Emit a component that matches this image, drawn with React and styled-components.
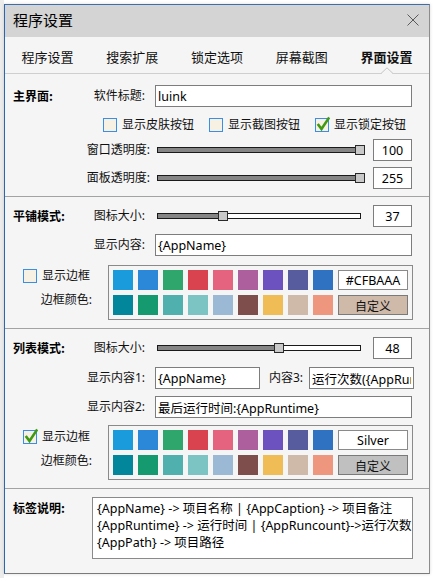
import React from "react";
import styled, { createGlobalStyle } from "styled-components";

const FONT = `"Noto Sans", "Noto Sans CJK SC", sans-serif`;

const Global = createGlobalStyle`
  * { box-sizing: border-box; }
  body {
    margin: 0;
    background: #ffffff;
    font-family: ${FONT};
    color: #000;
  }
`;

const Page = styled.div`
  padding: 4px 0 0 4px;
  width: 434px;
  height: 578px;
  background: linear-gradient(to right, #ececec 0, #ececec 4px, #ffffff 4px);
`;

const Window = styled.div`
  width: 426px;
  height: 570px;
  border: 1px solid;
  border-color: #3d6ea8 #8c8c8c #7a7a7a #2d66b0;
  background: #f5f5f5;
  display: flex;
  flex-direction: column;
  box-shadow: 0 0 3px rgba(0, 0, 0, 0.15);
`;

const TitleBar = styled.div`
  height: 32px;
  flex-shrink: 0;
  background: #d4d4d4;
  display: flex;
  align-items: center;
  justify-content: space-between;
  padding: 0 10px 0 8px;
`;

const TitleText = styled.div`
  font-family: "Noto Sans CJK SC", sans-serif;
  font-size: 15px;
  line-height: 20px;
  margin-top: -2px;
`;

const CloseIcon = styled.svg`
  width: 12px;
  height: 12px;
  margin-top: -2px;
`;

const TabBar = styled.div`
  position: relative;
  height: 37px;
  flex-shrink: 0;
  display: grid;
  grid-template-columns: repeat(5, 1fr);
  border-bottom: 1px solid #cfcfcf;
  background: #f5f5f5;
`;

const Tab = styled.div`
  position: relative;
  display: flex;
  align-items: center;
  justify-content: center;
  padding-top: 3px;
  font-family: "Noto Sans CJK SC", sans-serif;
  font-size: 13px;
  font-weight: ${(p) => (p.$active ? 700 : 400)};
  color: #111;
`;

const Notch = styled.svg`
  position: absolute;
  bottom: -1px;
  left: 50%;
  margin-left: -6px;
  width: 12px;
  height: 7px;
`;

const Section = styled.div`
  padding: ${(p) => p.$pt}px 0 ${(p) => p.$pb}px 8px;
  border-bottom: ${(p) => (p.$last ? "none" : "1px solid #a3a3a3")};
  flex-shrink: 0;
  flex-grow: ${(p) => (p.$last ? 1 : 0)};
  display: flex;
  flex-direction: column;
`;

const Row = styled.div`
  display: flex;
  align-items: ${(p) => p.$align || "center"};
  height: ${(p) => p.$h}px;
  margin-top: ${(p) => p.$mt || 0}px;
`;

const Lead = styled.div`
  width: ${(p) => p.$w}px;
  margin-right: ${(p) => p.$gap}px;
  flex-shrink: 0;
  display: flex;
  justify-content: space-between;
  align-items: center;
  align-self: ${(p) => (p.$top ? "flex-start" : "center")};
  height: ${(p) => (p.$top ? "22px" : "auto")};
`;

const SectionTitle = styled.span`
  font-family: "Noto Sans CJK SC", sans-serif;
  font-size: 12px;
  font-weight: 700;
  line-height: 16px;
`;

const FieldLabel = styled.span`
  font-family: ${FONT};
  font-size: 12px;
  line-height: 16px;
  white-space: nowrap;
  color: #111;
  margin-left: ${(p) => p.$ml || 0}px;
  margin-right: ${(p) => p.$mr || 0}px;
`;

const TextBox = styled.input`
  width: ${(p) => p.$w}px;
  height: 22px;
  border: 1px solid #7d7d7d;
  background: #ffffff;
  padding: 0 2px;
  font-family: ${FONT};
  font-size: 12.5px;
  color: #000;
  outline: none;
  text-align: ${(p) => (p.$center ? "center" : "left")};
`;

const CheckRow = styled.div`
  display: flex;
  align-items: center;
  height: 13px;
  margin-top: ${(p) => p.$mt || 0}px;
  padding-left: ${(p) => p.$pl || 0}px;
  gap: 15px;
`;

const CheckItem = styled.label`
  display: flex;
  align-items: center;
  gap: 5px;
  font-family: ${FONT};
  font-size: 12px;
  line-height: 16px;
  color: #111;
`;

const Box = styled.span`
  position: relative;
  width: 14px;
  height: 14px;
  border: 1px solid #3a8ee6;
  background: #f6f1e2;
  flex-shrink: 0;
`;

const CheckMark = styled.svg`
  position: absolute;
  left: 0px;
  top: -3px;
  width: 14px;
  height: 16px;
`;

const SliderWrap = styled.div`
  position: relative;
  width: ${(p) => p.$w}px;
  height: 10px;
  margin-left: 2px;
  margin-right: ${(p) => p.$mr}px;
  display: flex;
  align-items: center;
  flex-shrink: 0;
`;

const Track = styled.div`
  width: 100%;
  height: 6px;
  border: 1px solid #1a1a1a;
  background: #ffffff;
  display: flex;
`;

const Fill = styled.div`
  height: 100%;
  background: #858585;
`;

const Thumb = styled.div`
  position: absolute;
  top: 0;
  width: 10px;
  height: 10px;
  background: #c9c9c9;
  border: 1px solid #2a2a2a;
`;

const Panel = styled.div`
  width: 305px;
  height: 55px;
  border: 1px solid #8a8a8a;
  padding: 4px;
  display: flex;
  flex-shrink: 0;
`;

const Swatches = styled.div`
  display: grid;
  grid-template-columns: repeat(9, 20px);
  grid-template-rows: 20px 20px;
  column-gap: 5px;
  row-gap: 5px;
  margin-right: 5px;
`;

const Swatch = styled.div`
  background: ${(p) => p.$c};
`;

const PanelSide = styled.div`
  width: 70px;
  display: flex;
  flex-direction: column;
  gap: 5px;
`;

const ColorText = styled.div`
  height: 20px;
  border: 1px solid #8a8a8a;
  background: #fff;
  display: flex;
  align-items: center;
  justify-content: center;
  font-family: ${FONT};
  font-size: 12.5px;
`;

const CustomButton = styled.div`
  height: 20px;
  border: 1px solid #7a7a7a;
  background: ${(p) => p.$bg};
  display: flex;
  align-items: center;
  justify-content: center;
  font-family: "Noto Sans CJK SC", sans-serif;
  font-size: 12px;
  color: #111;
`;

const BorderCol = styled.div`
  width: 95px;
  flex-shrink: 0;
  display: flex;
  flex-direction: column;
  padding-top: ${(p) => p.$pt}px;
`;

const BorderLabel = styled.div`
  text-align: right;
  padding-right: 16px;
  margin-top: ${(p) => p.$mt}px;
  font-family: ${FONT};
  font-size: 12px;
  line-height: 16px;
  color: #111;
`;

const Notes = styled.div`
  width: 321px;
  height: 62px;
  border: 1px solid #8a8a8a;
  background: #fff;
  padding: 2px 4px;
  font-family: ${FONT};
  font-size: 12.5px;
  line-height: 17px;
  color: #000;
  white-space: nowrap;
  overflow: hidden;
`;

const row1 = ["#1a9bdc", "#2b88d9", "#2ea66c", "#d9434f", "#e5637f", "#ad5e9d", "#6b52be", "#575c9f", "#2f72c1"];
const row2 = ["#01869c", "#159a70", "#4fb0ae", "#7bc4c3", "#9bb8d5", "#7d4e4c", "#f0bc56", "#cfb9a9", "#ef967e"];

function Check({ checked, children }) {
  return (
    <CheckItem>
      <Box>
        {checked && (
          <CheckMark viewBox="0 0 14 16">
            <polyline points="2.5,9 5.5,13 12.5,2.5" fill="none" stroke="#3f9a12" strokeWidth="2.6" strokeLinecap="square" />
          </CheckMark>
        )}
      </Box>
      {children}
    </CheckItem>
  );
}

function Slider({ width, thumb, mr }) {
  return (
    <SliderWrap $w={width} $mr={mr}>
      <Track>
        <Fill style={{ width: thumb + 5 }} />
      </Track>
      <Thumb style={{ left: thumb }} />
    </SliderWrap>
  );
}

function ColorPanel({ text, btn }) {
  return (
    <Panel>
      <Swatches>
        {[...row1, ...row2].map((c, i) => (
          <Swatch key={i} $c={c} />
        ))}
      </Swatches>
      <PanelSide>
        <ColorText>{text}</ColorText>
        <CustomButton $bg={btn}>自定义</CustomButton>
      </PanelSide>
    </Panel>
  );
}

const tabs = ["程序设置", "搜索扩展", "锁定选项", "屏幕截图", "界面设置"];

export default function App() {
  return (
    <Page>
      <Global />
      <Window>
        <TitleBar>
          <TitleText>程序设置</TitleText>
          <CloseIcon viewBox="0 0 12 12">
            <path d="M0.5 0.5 L11.5 11.5 M11.5 0.5 L0.5 11.5" stroke="#5a5a5a" strokeWidth="1" fill="none" />
          </CloseIcon>
        </TitleBar>
        <TabBar>
          {tabs.map((t, i) => (
            <Tab key={t} $active={i === 4}>
              {t}
              {i === 4 && (
                <Notch viewBox="0 0 12 7">
                  <polygon points="0,7 6,1 12,7" fill="#f5f5f5" />
                  <polyline points="0,6.5 6,0.8 12,6.5" fill="none" stroke="#c4c4c4" strokeWidth="1" />
                </Notch>
              )}
            </Tab>
          ))}
        </TabBar>

        <Section $pt={11} $pb={7}>
          <Row $h={22}>
            <Lead $w={132} $gap={10}>
              <SectionTitle>主界面:</SectionTitle>
              <FieldLabel>软件标题:</FieldLabel>
            </Lead>
            <TextBox $w={257} defaultValue="luink" />
          </Row>
          <CheckRow $mt={11} $pl={90}>
            <Check>显示皮肤按钮</Check>
            <Check>显示截图按钮</Check>
            <Check checked>显示锁定按钮</Check>
          </CheckRow>
          <Row $h={22} $mt={8}>
            <Lead $w={137} $gap={5}>
              <span />
              <FieldLabel>窗口透明度:</FieldLabel>
            </Lead>
            <Slider width={208} thumb={198} mr={8} />
            <TextBox $w={39} $center defaultValue="100" />
          </Row>
          <Row $h={22} $mt={6}>
            <Lead $w={137} $gap={5}>
              <span />
              <FieldLabel>面板透明度:</FieldLabel>
            </Lead>
            <Slider width={208} thumb={198} mr={8} />
            <TextBox $w={39} $center defaultValue="255" />
          </Row>
        </Section>

        <Section $pt={8} $pb={8}>
          <Row $h={22}>
            <Lead $w={132} $gap={10}>
              <SectionTitle>平铺模式:</SectionTitle>
              <FieldLabel>图标大小:</FieldLabel>
            </Lead>
            <Slider width={204} thumb={61} mr={12} />
            <TextBox $w={39} $center defaultValue="37" />
          </Row>
          <Row $h={22} $mt={7}>
            <Lead $w={132} $gap={10}>
              <span />
              <FieldLabel>显示内容:</FieldLabel>
            </Lead>
            <TextBox $w={257} defaultValue="{AppName}" />
          </Row>
          <Row $h={55} $mt={9} $align="flex-start">
            <BorderCol $pt={4}>
              <CheckRow $pl={10}>
                <Check>显示边框</Check>
              </CheckRow>
              <BorderLabel $mt={10}>边框颜色:</BorderLabel>
            </BorderCol>
            <ColorPanel text="#CFBAAA" btn="#cfbaaa" />
          </Row>
        </Section>

        <Section $pt={8} $pb={8}>
          <Row $h={22}>
            <Lead $w={132} $gap={10}>
              <SectionTitle>列表模式:</SectionTitle>
              <FieldLabel>图标大小:</FieldLabel>
            </Lead>
            <Slider width={204} thumb={117} mr={12} />
            <TextBox $w={39} $center defaultValue="48" />
          </Row>
          <Row $h={22} $mt={8}>
            <Lead $w={132} $gap={10}>
              <span />
              <FieldLabel>显示内容1:</FieldLabel>
            </Lead>
            <TextBox $w={105} defaultValue="{AppName}" />
            <FieldLabel $ml={9} $mr={6}>内容3:</FieldLabel>
            <TextBox $w={105} defaultValue="运行次数({AppRuncount})" />
          </Row>
          <Row $h={22} $mt={7}>
            <Lead $w={132} $gap={10}>
              <span />
              <FieldLabel>显示内容2:</FieldLabel>
            </Lead>
            <TextBox $w={257} defaultValue="最后运行时间:{AppRuntime}" />
          </Row>
          <Row $h={55} $mt={7} $align="flex-start">
            <BorderCol $pt={5}>
              <CheckRow $pl={10}>
                <Check checked>显示边框</Check>
              </CheckRow>
              <BorderLabel $mt={10}>边框颜色:</BorderLabel>
            </BorderCol>
            <ColorPanel text="Silver" btn="#c0c0c0" />
          </Row>
        </Section>

        <Section $pt={8} $pb={0} $last>
          <Row $h={62} $align="flex-start">
            <Lead $w={79} $gap={0} $top>
              <SectionTitle>标签说明:</SectionTitle>
            </Lead>
            <Notes>
              <div>{"{AppName} -> 项目名称 | {AppCaption} -> 项目备注"}</div>
              <div>{"{AppRuntime} -> 运行时间 | {AppRuncount}->运行次数"}</div>
              <div>{"{AppPath} -> 项目路径"}</div>
            </Notes>
          </Row>
        </Section>
      </Window>
    </Page>
  );
}
